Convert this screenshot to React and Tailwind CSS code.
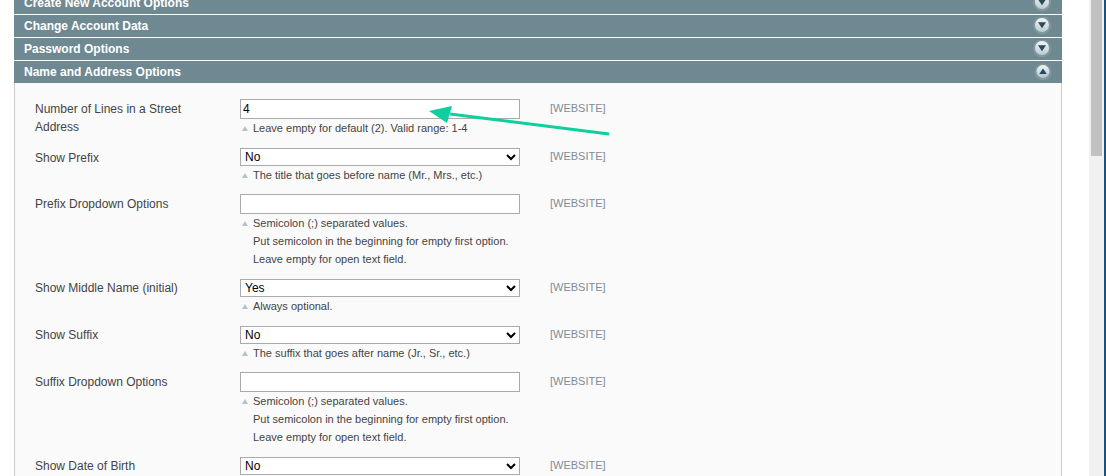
const sections = ["Create New Account Options", "Change Account Data", "Password Options"];

const semicolonHint = [
  "Semicolon (;) separated values.",
  "Put semicolon in the beginning for empty first option.",
  "Leave empty for open text field.",
];

const rows = [
  { label: "Number of Lines in a Street Address", type: "input", value: "4", hint: ["Leave empty for default (2). Valid range: 1-4"] },
  { label: "Show Prefix", type: "select", value: "No", tight: true, hint: ["The title that goes before name (Mr., Mrs., etc.)"] },
  { label: "Prefix Dropdown Options", type: "input", value: "", hint: semicolonHint },
  { label: "Show Middle Name (initial)", type: "select", value: "Yes", labelUp: true, hint: ["Always optional."] },
  { label: "Show Suffix", type: "select", value: "No", tight: true, labelUp: true, hint: ["The suffix that goes after name (Jr., Sr., etc.)"] },
  { label: "Suffix Dropdown Options", type: "input", value: "", hint: semicolonHint },
  { label: "Show Date of Birth", type: "select", value: "No", labelUp: true, hint: [] },
];

const ToggleIcon = ({ open }) => (
  <svg width="18" height="18" viewBox="0 0 18 18">
    <defs>
      <linearGradient id={open ? "toggleUp" : "toggleDown"} x1="0" y1="0" x2="0" y2="1">
        <stop offset="0" stopColor="#f2f5f6" />
        <stop offset="1" stopColor={open ? "#a9c6cd" : "#b9cdd3"} />
      </linearGradient>
    </defs>
    {open ? (
      <>
        <circle cx="9" cy="9" r="8.5" fill="#8a9da4" opacity="0.7" />
        <circle cx="9" cy="8.5" r="6.5" fill="url(#toggleUp)" />
        <path d="M9 5.5 L12.7 11 H5.3 Z" fill="#1f4a5c" />
      </>
    ) : (
      <>
        <circle cx="9" cy="8.5" r="9" fill="#8a9da4" opacity="0.7" />
        <circle cx="9" cy="8" r="7" fill="url(#toggleDown)" />
        <path d="M5 5.3 H13 L9 11.3 Z" fill="#2a4a58" />
      </>
    )}
  </svg>
);

const SectionHeader = ({ title, open }) => (
  <div
    className={`flex h-[22px] shrink-0 items-center justify-between bg-[#6f8992] pl-[10px] text-[12px] font-bold text-white ${
      open ? "pr-[10px]" : "pr-[11px]"
    }`}
  >
    <span>{title}</span>
    <ToggleIcon open={open} />
  </div>
);

const Row = ({ row }) => (
  <div className={`flex ${row.tight ? "pb-[10px]" : "pb-[11px]"}`}>
    <label className={`w-[205px] pr-[30px] leading-[18px] text-[#444] ${row.labelUp ? "pt-0" : "pt-[1px]"}`}>
      {row.label}
    </label>
    <div className="w-[310px]">
      {row.type === "input" ? (
        <input
          readOnly
          value={row.value}
          className="block h-[20px] w-[280px] border border-[#aaa] bg-white px-[2px] text-[12px] text-black outline-none"
        />
      ) : (
        <select
          defaultValue={row.value}
          className="block h-[18px] w-[280px] border border-[#aaa] bg-white text-[12px] text-black"
        >
          <option>{row.value}</option>
        </select>
      )}
      {row.hint.map((line, idx) => (
        <p key={idx} className="relative pl-[13px] text-[11px] leading-[18px] text-[#444]">
          {idx === 0 && (
            <span className="absolute left-[2px] top-[7px] h-0 w-0 border-x-[3.5px] border-b-[5px] border-x-transparent border-b-[#b4c2c7]" />
          )}
          {line}
        </p>
      ))}
    </div>
    <span className={`text-[11px] leading-[14px] text-[#7f8c99] ${row.type === "input" ? "pt-[2px]" : "pt-[1px]"}`}>
      [WEBSITE]
    </span>
  </div>
);

export default function App() {
  return (
    <div className="relative flex h-[476px] overflow-hidden bg-white font-['Liberation_Sans',sans-serif] text-[12px]">
      <div className="mt-[-8px] ml-[14px] flex w-[1048px] flex-col">
        {sections.map((title) => (
          <div key={title} className="mb-[1px] shrink-0">
            <SectionHeader title={title} />
          </div>
        ))}
        <SectionHeader title="Name and Address Options" open />
        <div className="shrink-0 border-x border-[#ccc] bg-[#fafafa] pl-[20px] pt-[16px]">
          {rows.map((row) => (
            <Row key={row.label} row={row} />
          ))}
        </div>
      </div>

      {/* page scrollbar */}
      <div className="ml-[27px] h-full w-[15px] bg-[#f1f1f1] px-[2px]">
        <div className="h-[156px] w-[11px] bg-[#c1c1c1]" />
      </div>
      <div className="h-full w-[2px] bg-[#1f527a]" />

      {/* annotation arrow */}
      <svg className="absolute left-[420px] top-[100px]" width="200" height="40" viewBox="0 0 200 40">
        <path d="M189 34 L30 14" stroke="#10cf9e" strokeWidth="3" fill="none" />
        <path d="M9 11 L32 6 L27 23 Z" fill="#10cf9e" />
      </svg>
    </div>
  );
}
